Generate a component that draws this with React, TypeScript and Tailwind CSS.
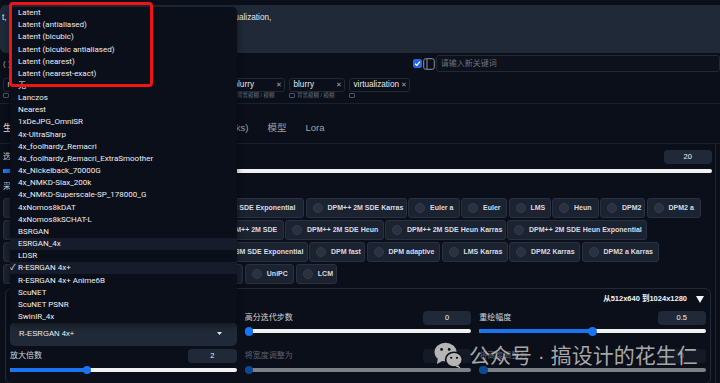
import React from "react";

const upscalers = [
  "Latent",
  "Latent (antialiased)",
  "Latent (bicubic)",
  "Latent (bicubic antialiased)",
  "Latent (nearest)",
  "Latent (nearest-exact)",
  "无",
  "Lanczos",
  "Nearest",
  "1xDeJPG_OmniSR",
  "4x-UltraSharp",
  "4x_foolhardy_Remacri",
  "4x_foolhardy_Remacri_ExtraSmoother",
  "4x_Nickelback_70000G",
  "4x_NMKD-Siax_200k",
  "4x_NMKD-Superscale-SP_178000_G",
  "4xNomos8kDAT",
  "4xNomos8kSCHAT-L",
  "BSRGAN",
  "ESRGAN_4x",
  "LDSR",
  "R-ESRGAN 4x+",
  "R-ESRGAN 4x+ Anime6B",
  "ScuNET",
  "ScuNET PSNR",
  "SwinIR_4x",
];

const samplers: [string, number][] = [
  ["DPM++ 2M Karras", 86],
  ["DPM++ SDE Karras", 88],
  ["DPM++ 2M SDE Exponential", 124],
  ["DPM++ 2M SDE Karras", 101],
  ["Euler a", 51.5],
  ["Euler", 46],
  ["LMS", 42],
  ["Heun", 46.5],
  ["DPM2", 45],
  ["DPM2 a", 54.5],
  ["DPM++ 2S a", 68],
  ["DPM++ 2M", 62],
  ["DPM++ SDE", 66],
  ["DPM++ 2M SDE", 80],
  ["DPM++ 2M SDE Heun", 98.5],
  ["DPM++ 2M SDE Heun Karras", 120.5],
  ["DPM++ 2M SDE Heun Exponential", 140],
  ["DPM++ 3M SDE", 80],
  ["DPM++ 3M SDE Karras", 102],
  ["DPM++ 3M SDE Exponential", 119.5],
  ["DPM fast", 56],
  ["DPM adaptive", 73.5],
  ["LMS Karras", 66],
  ["DPM2 Karras", 71],
  ["DPM2 a Karras", 77],
  ["DPM++ 2S a Karras", 90],
  ["Restart", 50],
  ["DDIM", 46],
  ["PLMS", 49.8],
  ["UniPC", 49.5],
  ["LCM", 41.5],
];

const tags: [string, number, boolean][] = [
  ["masterpiece", 70, true],
  ["best quality", 72, true],
  ["illustration", 72, true],
  ["blurry", 56, true],
  ["blurry", 56, true],
  ["virtualization", 60.5, false],
];

function NumBox({ value, dim }: { value: string; dim?: boolean }) {
  return (
    <div
      className={`flex h-[14px] w-[48.5px] items-center justify-center rounded-[4px] text-[7.5px] ${
        dim ? "bg-[#141a26] text-[#6b7280]" : "bg-[#1f2937] text-[#f3f4f6]"
      }`}
    >
      {value}
    </div>
  );
}

function Slider({ value, min, max, dim }: { value: number; min: number; max: number; dim?: boolean }) {
  const p = (value - min) / (max - min);
  return (
    <div className="relative flex h-[8.5px] items-center">
      <div className={`h-[4px] w-full rounded-full ${dim ? "bg-[#7d8086]" : "bg-[#f1f1f1]"}`} />
      {!dim && (
        <div
          className="absolute left-0 h-[4px] rounded-full bg-[#1a74f2]"
          style={{ width: `calc(4px + ${p} * (100% - 8.5px))` }}
        />
      )}
      <div
        className={`absolute top-0 h-[8.5px] w-[8.5px] rounded-full ${dim ? "bg-[#0c4a95]" : "bg-[#1a74f2]"}`}
        style={{ left: `calc(${p} * (100% - 8.5px))` }}
      />
    </div>
  );
}

function SliderField({
  label,
  value,
  num,
  min,
  max,
  dim,
}: {
  label: string;
  value: string;
  num: number;
  min: number;
  max: number;
  dim?: boolean;
}) {
  return (
    <div className="flex flex-col">
      <div className="flex h-[14px] items-center justify-between">
        <span className={`text-[8px] ${dim ? "text-[#596070]" : "text-[#d1d5db]"}`}>{label}</span>
        <NumBox value={value} dim={dim} />
      </div>
      <div className="mt-[2.5px]">
        <Slider value={num} min={min} max={max} dim={dim} />
      </div>
    </div>
  );
}

function WeChatIcon() {
  return (
    <svg width="29" height="27" viewBox="0 0 29 27">
      <ellipse cx="11.5" cy="10" rx="11" ry="9.3" fill="#b5b5b5" />
      <polygon points="4,15 3,22 10,18" fill="#b5b5b5" />
      <circle cx="7.6" cy="7.4" r="1.4" fill="#0b0f19" />
      <circle cx="15.2" cy="7.4" r="1.4" fill="#0b0f19" />
      <ellipse cx="20" cy="17.6" rx="8.4" ry="7.4" fill="#b5b5b5" stroke="#0b0f19" strokeWidth="1.6" />
      <polygon points="24,23 27,26.5 21.5,24.6" fill="#b5b5b5" />
      <circle cx="17.2" cy="15.8" r="1.1" fill="#0b0f19" />
      <circle cx="23" cy="15.8" r="1.1" fill="#0b0f19" />
    </svg>
  );
}

export default function App() {
  return (
    <div className="relative h-[383px] w-[720px] overflow-hidden bg-[#0b0f19] font-['Liberation_Sans','Noto_Sans_CJK_SC',sans-serif] text-[#e5e7eb]">
      <div className="flex flex-col">
        {/* prompt textarea */}
        <div className="mt-[5px] h-[48px] w-[730px] rounded-[6px] bg-[#1f2937] pl-[2px] pt-[7px]">
          <div className="flex whitespace-nowrap text-[8.2px] leading-[11px] text-[#e5e7eb]">
            <span className="inline-block w-[221.5px] overflow-hidden">t,&nbsp;&nbsp;&nbsp;poster, blurry, blurry, </span>
            <span>virtualization,</span>
          </div>
        </div>

        {/* keyword input row */}
        <div className="mt-[2px] flex h-[17px] items-center pl-[3px]">
          <div className="flex w-[410.3px] items-center text-[8px] text-[#9ca3af]">( )</div>
          <div className="flex h-[9px] w-[9px] items-center justify-center rounded-[2px] bg-[#2563eb]">
            <svg width="7" height="7" viewBox="0 0 7 7">
              <polyline points="1,3.8 2.8,5.4 6,1.6" fill="none" stroke="white" strokeWidth="1.3" />
            </svg>
          </div>
          <svg className="ml-[1px]" width="12" height="12" viewBox="0 0 12 12">
            <rect x="0.7" y="0.7" width="10.6" height="10.6" rx="2" fill="none" stroke="#8b919c" strokeWidth="1" />
            <line x1="4" y1="1" x2="4" y2="11" stroke="#8b919c" strokeWidth="1" />
          </svg>
          <div className="ml-[0.5px] flex h-[17px] flex-1 items-center rounded-[3px] border border-[#1f2937] bg-[#0d111b] pl-[4px] text-[8px] text-[#6b7280]">
            请输入新关键词
          </div>
        </div>

        {/* tags */}
        <div className="mt-[6px] flex gap-[4px] border-b border-[#1a2130] pb-[3.5px] pl-[3px]">
          {tags.map(([t, w, sub], i) => (
            <div key={i} className="flex flex-col" style={{ width: w }}>
              <div className="flex h-[14px] items-center justify-between rounded-[3px] border border-[#1f2937] bg-[#0b0f19] pl-[3.5px] pr-[2px]">
                <span className="text-[8.2px] text-[#e5e7eb]">{t}</span>
                <span className="text-[7px] text-[#9ca3af]">✕</span>
              </div>
              <div className="flex h-[7px] items-center gap-[2px] text-[5.5px] leading-[7px] text-[#6b7280]">
                <span className="inline-block h-[4.5px] w-[6px] rounded-[1px] border border-[#4b5563]" />
                {sub && <span>背景模糊 / 模糊</span>}
              </div>
            </div>
          ))}
        </div>

        {/* tabs */}
        <div className="flex border-b border-[#1a2130] pb-[4px] pl-[3px] pt-[15px]">
          <div className="flex w-[255px] items-center justify-between text-[9.5px] text-[#9ca3af]">
            <span className="flex h-[20px] items-center text-[#e5e7eb]">生成</span>
            <span className="flex h-[20px] items-center px-[9.5px]">嵌入式 (T.I. Embedding)</span>
            <span className="flex h-[20px] items-center pr-[9.5px]">超网络 (Hypernetworks)</span>
          </div>
          <span className="flex h-[20px] items-center px-[9.5px] text-[9.5px] text-[#9ca3af]">模型</span>
          <span className="flex h-[20px] items-center px-[9.5px] text-[9.5px] text-[#9ca3af]">Lora</span>
        </div>

        {/* settings */}
        <div className="flex h-[240px] w-[716px] flex-col border-r border-[#1a2130] pl-[3px] pr-[3px]">
          <div className="mt-[6px] flex h-[14px] items-center justify-between">
            <span className="text-[8px] text-[#d1d5db]">迭代步数 (Steps)</span>
            <NumBox value="20" />
          </div>
          <div className="mt-[3px]">
            <Slider value={20} min={1} max={150} />
          </div>
          <div className="mt-[7px] flex h-[10px] items-center text-[8px] text-[#d1d5db]">采样方法 (Sampler)</div>
          <div className="mt-[6px] flex flex-wrap gap-x-[1.5px] gap-y-[2px]">
            {samplers.map(([s, w]) => (
              <div
                key={s}
                className="flex h-[20px] items-center gap-[5px] overflow-hidden whitespace-nowrap rounded-[3px] border border-[#283041] bg-[#1b2230] pl-[6px]"
                style={{ width: w }}
              >
                <span className="h-[10px] w-[10px] shrink-0 rounded-full border border-[#343c4c] bg-[#2a3140]" />
                <span className="text-[7px] font-bold text-[#d8dce3]">{s}</span>
              </div>
            ))}
          </div>

          {/* hires fix panel */}
          <div className="ml-[2px] mt-[4px] flex h-[120px] w-[706px] flex-col rounded-[6px] border border-[#222a38] px-[4px] pt-[4px]">
            <div className="flex h-[12px] items-center justify-end gap-[9px] pr-[2px]">
              <span className="text-[7.5px] font-bold text-[#f3f4f6]">从512x640 到1024x1280</span>
              <svg width="8" height="7" viewBox="0 0 8 7">
                <polygon points="0,0 8,0 4,7" fill="#f3f4f6" />
              </svg>
            </div>
            <div className="mt-[3px] grid grid-cols-3 gap-x-[8px] gap-y-[3.5px]">
              <div className="flex flex-col">
                <div className="flex h-[12px] items-center text-[8px] text-[#d1d5db]">放大算法</div>
                <div className="mt-[2px] flex h-[23.5px] items-center justify-between rounded-[5px] bg-[#1f2937] pl-[9px] pr-[15px]">
                  <span className="text-[7.7px] text-[#f3f4f6]">R-ESRGAN 4x+</span>
                  <svg width="5" height="3" viewBox="0 0 5 3">
                    <polygon points="0,0 5,0 2.5,3" fill="#e5e7eb" />
                  </svg>
                </div>
              </div>
              <div className="pt-[2.5px]">
                <SliderField label="高分迭代步数" value="0" num={0} min={0} max={150} />
              </div>
              <div className="pt-[2.5px]">
                <SliderField label="重绘幅度" value="0.5" num={0.5} min={0} max={1} />
              </div>
              <SliderField label="放大倍数" value="2" num={2} min={1} max={4} />
              <SliderField label="将宽度调整为" value="0" num={0} min={0} max={2048} dim />
              <SliderField label="将高度调整为" value="0" num={0} min={0} max={2048} dim />
            </div>
          </div>
        </div>
      </div>

      {/* dropdown overlay */}
      <div className="absolute left-[10px] top-[7px] z-10 flex h-[316px] w-[227px] flex-col overflow-hidden rounded-[5px] bg-[#0b0f19] font-['Roboto','Noto_Sans_CJK_SC',sans-serif] shadow-[0_2px_6px_rgba(0,0,0,0.5)]">
        {upscalers.map((u) => {
          const hl = u === "ESRGAN_4x" || u === "R-ESRGAN 4x+";
          return (
            <div
              key={u}
              className={`flex h-[12.16px] shrink-0 items-center whitespace-nowrap text-[8px] text-[#eceef2] ${
                hl ? "bg-[#161c29]" : ""
              }`}
            >
              <span className="w-[8px] text-[8px]">{u === "R-ESRGAN 4x+" ? "✓" : ""}</span>
              <span>{u}</span>
            </div>
          );
        })}
      </div>

      {/* red highlight */}
      <div className="absolute left-[9px] top-[2px] z-20 h-[85px] w-[144px] rounded-[4px] border-[3px] border-[#f01414]" />

      {/* watermark */}
      <div className="absolute left-[434px] top-[342px] z-30 flex items-center gap-[6px]">
        <WeChatIcon />
        <span className="text-[21px] leading-[26px] text-[#c4c4c4]/85">公众号 · 搞设计的花生仁</span>
      </div>
    </div>
  );
}
